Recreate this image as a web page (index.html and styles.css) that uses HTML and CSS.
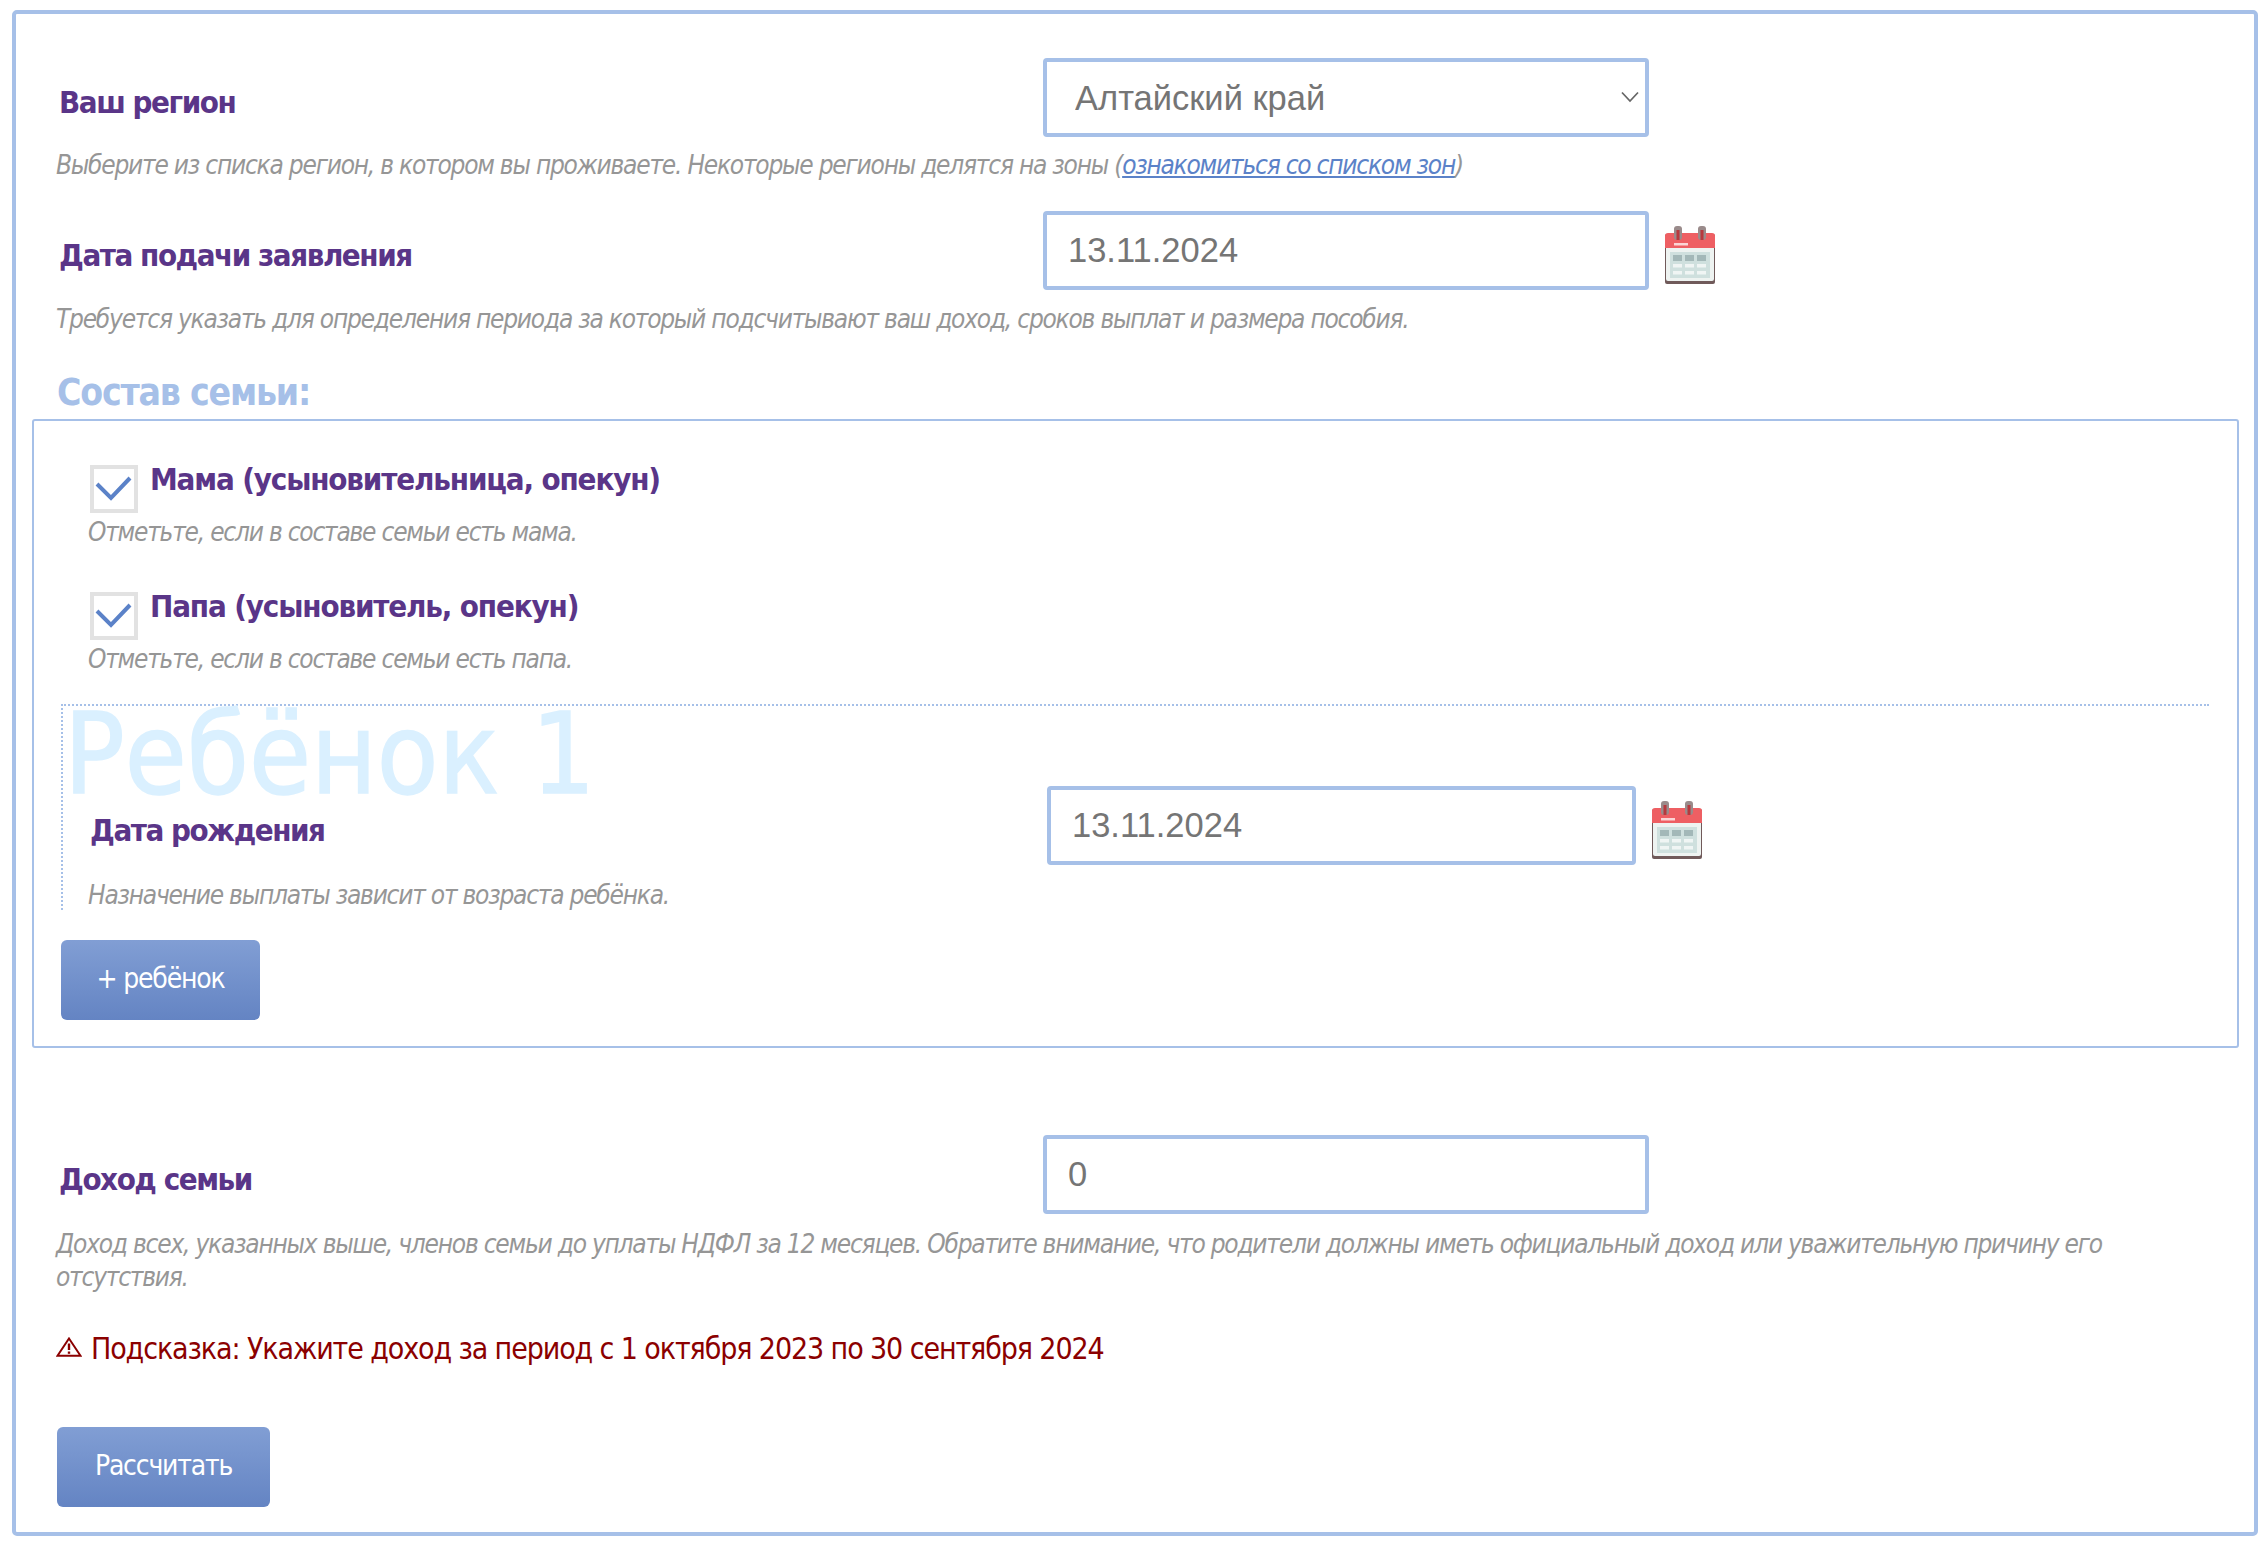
FILE: index.html
```html
<!DOCTYPE html>
<html lang="ru">
<head>
<meta charset="utf-8">
<title>Калькулятор пособия</title>
<link rel="stylesheet" href="styles.css">
</head>
<body>
<svg class="defs" width="0" height="0" aria-hidden="true">
  <defs>
    <filter id="soft"><feGaussianBlur stdDeviation="0.7"/></filter>
    <symbol id="cal" viewBox="0 0 52 58">
      <g filter="url(#soft)">
        <rect x="1" y="8" width="50" height="50" rx="2" fill="#6f5a5a"/>
        <rect x="2" y="8" width="48" height="47" rx="2" fill="#eef3f1"/>
        <path d="M1 22V10a3 3 0 0 1 3-3h44a3 3 0 0 1 3 3v12z" fill="#ee5f63"/>
        <rect x="10" y="0" width="8" height="14" rx="3" fill="#9a8b8b"/>
        <rect x="34" y="0" width="8" height="14" rx="3" fill="#9a8b8b"/>
        <rect x="12.500" y="4" width="3" height="10" fill="#b8373c"/>
        <rect x="36.500" y="4" width="3" height="10" fill="#b8373c"/>
        <rect x="10" y="17" width="14" height="2.500" fill="#fbd4d4"/>
        <rect x="6" y="26" width="40" height="26" fill="#cfe0de"/>
        <g fill="#a3b8b8"><rect x="9" y="29" width="9" height="6"/><rect x="21" y="29" width="9" height="6"/><rect x="33" y="29" width="9" height="6"/></g>
        <g fill="#f0f5f4"><rect x="9" y="38" width="9" height="3.500"/><rect x="21" y="38" width="9" height="3.500"/><rect x="33" y="38" width="9" height="3.500"/><rect x="9" y="45" width="9" height="3.500"/><rect x="21" y="45" width="9" height="3.500"/><rect x="33" y="45" width="9" height="3.500"/></g>
      </g>
    </symbol>
    <symbol id="tick" viewBox="0 0 40 40">
      <path d="M3 15 L17 29 L36 9" fill="none" stroke="#5b82c8" stroke-width="4"/>
    </symbol>
  </defs>
</svg>
<form class="calc">
  <div class="row row-region">
    <label class="label">Ваш регион</label>
    <div class="select-wrap">
      <select class="field select"><option>Алтайский край</option></select>
      <svg class="chevron" viewBox="0 0 18 12" width="18" height="12"><path d="M1 1.500 L9 10 L17 1.500" fill="none" stroke="#666" stroke-width="1.700"/></svg>
    </div>
  </div>
  <p class="hint hint-region">Выберите из списка регион, в котором вы проживаете. Некоторые регионы делятся на зоны (<a href="#" class="link">ознакомиться со списком зон</a>)</p>

  <div class="row row-date">
    <label class="label">Дата подачи заявления</label>
    <input class="field" value="13.11.2024">
    <svg class="cal"><use href="#cal"/></svg>
  </div>
  <p class="hint hint-date">Требуется указать для определения периода за который подсчитывают ваш доход, сроков выплат и размера пособия.</p>

  <h2 class="family-title">Состав семьи:</h2>
  <div class="family">
    <div class="check check-first">
      <span class="box"><svg class="tick"><use href="#tick"/></svg></span>
      <span class="label check-label">Мама (усыновительница, опекун)</span>
    </div>
    <p class="hint check-hint">Отметьте, если в составе семьи есть мама.</p>
    <div class="check check-second">
      <span class="box"><svg class="tick"><use href="#tick"/></svg></span>
      <span class="label check-label">Папа (усыновитель, опекун)</span>
    </div>
    <p class="hint check-hint">Отметьте, если в составе семьи есть папа.</p>

    <div class="child">
      <div class="child-title">Ребёнок 1</div>
      <div class="row row-child">
        <label class="label">Дата рождения</label>
        <input class="field field-child" value="13.11.2024">
        <svg class="cal"><use href="#cal"/></svg>
      </div>
      <p class="hint child-hint">Назначение выплаты зависит от возраста ребёнка.</p>
    </div>
    <button type="button" class="btn btn-add">+ ребёнок</button>
  </div>

  <div class="row row-income">
    <label class="label">Доход семьи</label>
    <input class="field" value="0">
  </div>
  <p class="hint hint-income">Доход всех, указанных выше, членов семьи до уплаты НДФЛ за 12 месяцев. Обратите внимание, что родители должны иметь официальный доход или уважительную причину его отсутствия.</p>
  <p class="warning">
    <svg class="warn-icon" viewBox="0 0 26 20" width="26" height="20"><path d="M13 1.500 L24.500 18.700 H1.500 Z" fill="none" stroke="#8b0000" stroke-width="2"/><path d="M13 6.500 V13" stroke="#8b0000" stroke-width="2.400"/><path d="M13 14.500 V16.800" stroke="#8b0000" stroke-width="2.400"/></svg>
    <span>Подсказка: Укажите доход за период с 1 октября 2023 по 30 сентября 2024</span>
  </p>
  <button type="button" class="btn btn-calc">Рассчитать</button>
</form>
</body>
</html>
```

FILE: styles.css
```css
* { box-sizing: border-box; }
html, body { margin: 0; background: #fff; }
body { padding: 10px 10px 0 12px; font-family: "DejaVu Sans Condensed", "DejaVu Sans", sans-serif; }
.defs { position: absolute; }
.calc {
  height: 1526px;
  border: 4px solid #a6c0e8;
  border-radius: 5px;
  padding: 44px 40px 0 40px;
}
.row { display: flex; align-items: center; }
.label { font-weight: 700; font-size: 31px; letter-spacing: -1.15px; color: #5a3588; font-stretch: condensed; }
.row > .label { width: 987px; padding-left: 3px; margin-top: 8px; flex: none; letter-spacing: -1.45px; }
.field {
  width: 606px; height: 79px; flex: none;
  border: 4px solid #a6c0e8; border-radius: 4px; background: #fff;
  padding: 0 21px; margin: 0;
  font: 34.500px "Liberation Sans", Arial, sans-serif; color: #757575; outline: none;
}
.select { appearance: none; padding-left: 28px; display: block; }
.select-wrap { position: relative; flex: none; }
.chevron { position: absolute; right: 10px; top: 33px; }
.cal { width: 52px; height: 58px; margin: 8px 0 0 15px; flex: none; }
.hint { margin: 0; font-size: 26px; letter-spacing: -1.22px; font-style: italic; color: #969696; line-height: 33px; }
.hint-region { margin-top: 12px; }
.row-date { margin-top: 29px; }
.hint-date { margin-top: 13px; }
.family-title { margin: 37px 0 0 1px; font-size: 37px; letter-spacing: -1.2px; line-height: 40px; font-weight: 700; color: #a6c0e8; }
.family {
  margin: 6px 0 0 -24px; width: 2207px; height: 629px;
  border: 2px solid #a6c0e8; border-radius: 3px;
  padding: 0 27px;
}
.check { display: flex; align-items: flex-start; margin-left: 29px; }
.check-first { margin-top: 44px; }
.check-second { margin-top: 43px; }
.box { width: 48px; height: 48px; border: 4px solid #e2e2e2; flex: none; margin-right: 12px; display: block; }
.tick { width: 40px; height: 40px; display: block; }
.check-label { margin-top: -6px; line-height: 40px; }
.check-hint { margin: 3px 0 0 27px; }
.child {
  margin-top: 28px; width: 2148px; height: 206px;
  border-top: 2px dotted #a6c0e8; border-left: 2px dotted #a6c0e8;
  position: relative;
}
.child-title {
  position: absolute; left: 1px; top: 3px;
  font-size: 112px; line-height: 90px; color: #daf0ff;
  -webkit-text-stroke: 1.5px #daf0ff;
}
.row-child { padding-top: 80px; }
.row-child > .label { width: 984px; padding-left: 27px; }
.field-child { width: 589px; }
.child-hint { margin: 14px 0 0 25px; }
.btn {
  display: block; height: 80px; border: 0; border-radius: 6px;
  background: linear-gradient(#819ed4, #6484c3);
  color: #fff; font: 28px "DejaVu Sans Condensed", "DejaVu Sans", sans-serif;
  letter-spacing: -1.2px; padding: 0 0 3px;
}
.btn-add { width: 199px; margin-top: 30px; }
.btn-calc { width: 213px; margin: 60px 0 0 1px; }
.row-income { margin-top: 87px; }
.hint-income { margin-top: 14px; margin-right: 40px; }
.warning { margin: 37px 0 0; font-size: 30px; letter-spacing: -1.1px; line-height: 36px; color: #8b0000; display: flex; align-items: center; gap: 9px; }
.warn-icon { flex: none; margin-top: -4px; }
.link { color: #5b82c8; text-decoration: underline; }
```
